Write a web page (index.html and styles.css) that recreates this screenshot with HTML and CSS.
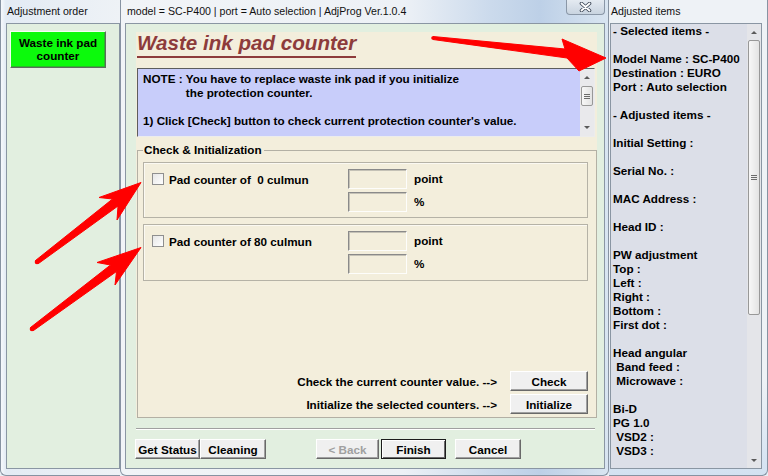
FILE: index.html
```html
<!DOCTYPE html>
<html>
<head>
	<meta charset="utf-8">
	<link rel="stylesheet" href="styles.css">
</head>

<body>
	<div class="window win-left">
		<div class="titlebar">Adjustment order</div>
		<div class="client client-left">
			<button class="order-button">Waste ink pad<br>counter</button>
		</div>
	</div>

	<div class="window win-main">
		<div class="titlebar">
			<span class="title-text">model = SC-P400 | port = Auto selection | AdjProg Ver.1.0.4</span>
			<span class="close-button">
				<svg width="13" height="10" viewBox="0 0 13 10">
					<path d="M2.5 1.5 L10.5 8.5 M10.5 1.5 L2.5 8.5" stroke="#3a4555" stroke-width="3.6" stroke-linecap="round" fill="none"/>
					<path d="M2.5 1.5 L10.5 8.5 M10.5 1.5 L2.5 8.5" stroke="#fff" stroke-width="1.9" stroke-linecap="round" fill="none"/>
				</svg>
			</span>
		</div>
		<div class="client client-main">
			<div class="panel">
				<div class="panel-title"><span>Waste ink pad counter</span></div>

				<div class="note">
					<div class="note-text">
						<div class="note-row">
							<span>NOTE :&nbsp;</span>
							<span>You have to replace waste ink pad if you initialize<br>the protection counter.</span>
						</div>
						<div class="note-step">1) Click [Check] button to check current protection counter's value.</div>
					</div>
					<div class="scrollbar note-scroll">
						<span class="arrow-box"><span class="arrow-up"></span></span>
						<span class="thumb note-thumb"><span class="grip"></span></span>
						<span class="track"></span>
						<span class="arrow-box"><span class="arrow-down"></span></span>
					</div>
				</div>

				<fieldset class="group">
					<legend>Check &amp; Initialization</legend>

					<div class="counter">
						<div class="counter-label"><span class="checkbox"></span>Pad counter of  0 culmun</div>
						<span class="field"></span>
						<span class="unit">point</span>
						<span></span>
						<span class="field"></span>
						<span class="unit">%</span>
					</div>

					<div class="counter">
						<div class="counter-label"><span class="checkbox"></span>Pad counter of 80 culmun</div>
						<span class="field"></span>
						<span class="unit">point</span>
						<span></span>
						<span class="field"></span>
						<span class="unit">%</span>
					</div>

					<div class="actions">
						<div class="action-row">
							<span>Check the current counter value. --&gt;</span>
							<button class="btn btn-action">Check</button>
						</div>
						<div class="action-row">
							<span>Initialize the selected counters. --&gt;</span>
							<button class="btn btn-action">Initialize</button>
						</div>
					</div>
				</fieldset>
			</div>

			<div class="separator"></div>

			<div class="footer">
				<button class="btn">Get Status</button>
				<button class="btn btn-clean">Cleaning</button>
				<button class="btn btn-back" disabled>&lt; Back</button>
				<button class="btn btn-default">Finish</button>
				<button class="btn btn-cancel">Cancel</button>
			</div>
		</div>
	</div>

	<div class="window win-right">
		<div class="titlebar">Adjusted items</div>
		<div class="client client-right">
			<div class="items">
				<div>- Selected items -</div>
				<div class="blank"></div>
				<div>Model Name : SC-P400</div>
				<div>Destination : EURO</div>
				<div>Port : Auto selection</div>
				<div class="blank"></div>
				<div>- Adjusted items -</div>
				<div class="blank"></div>
				<div>Initial Setting :</div>
				<div class="blank"></div>
				<div>Serial No. :</div>
				<div class="blank"></div>
				<div>MAC Address :</div>
				<div class="blank"></div>
				<div>Head ID :</div>
				<div class="blank"></div>
				<div>PW adjustment</div>
				<div>Top :</div>
				<div>Left :</div>
				<div>Right :</div>
				<div>Bottom :</div>
				<div>First dot :</div>
				<div class="blank"></div>
				<div>Head angular</div>
				<div> Band feed :</div>
				<div> Microwave :</div>
				<div class="blank"></div>
				<div>Bi-D</div>
				<div>PG 1.0</div>
				<div> VSD2 :</div>
				<div> VSD3 :</div>
			</div>
			<div class="scrollbar list-scroll">
				<span class="arrow-box"><span class="arrow-up"></span></span>
				<span class="thumb list-thumb"><span class="grip"></span></span>
				<span class="track"></span>
				<span class="arrow-box"><span class="arrow-down"></span></span>
			</div>
		</div>
	</div>

	<!-- red annotation arrows drawn over the screenshot -->
	<svg class="arrows" width="768" height="476" viewBox="0 0 768 476">
		<g fill="#ff0000" stroke="#ff0000" stroke-width="1" stroke-linejoin="round">
			<polygon points="433,36.5 565,49 562,39 606,58 579,71 567,58 433,39.5"/>
			<polygon points="35.5,260.5 112.5,199 99,197.5 141,182.5 117,220 118,206 38.5,263.5"/>
			<polygon points="30.5,327.5 110.5,265 97,262.5 141,247.5 115,285 116.5,271.5 33.5,330.5"/>
		</g>
		<circle cx="37" cy="262" r="2.3" fill="#ff0000"/>
		<circle cx="32" cy="329" r="2.3" fill="#ff0000"/>
		<circle cx="433" cy="38" r="1.8" fill="#ff0000"/>
	</svg>
</body>

</html>
```

FILE: styles.css
```css
body {
	margin: 0;
	width: 768px;
	height: 476px;
	overflow: hidden;
	position: relative;
	display: flex;
	font-family: 'Liberation Sans', Arial, sans-serif;
	font-size: 11.7px;
	font-weight: bold;
	color: #000;
	background: #e9eff5;
}

/* window frames */

.window {
	box-sizing: border-box;
	height: 476px;
	display: flex;
	flex-direction: column;
	border: 1px solid #8793a2;
	border-top: none;
	border-radius: 0 0 6px 6px;
	padding-bottom: 6px;
	background: #edf2f7;
}

.win-left {
	width: 120px;
	padding-left: 5px;
	border-right: none;
	border-radius: 0 0 0 6px;
	background: linear-gradient(to right, #f6f9fc, #e3ebf4 4%, #eef2f6);
}

.win-main {
	width: 489px;
	padding-left: 4px;
	padding-right: 3px;
	background: linear-gradient(to right, #f1f4f7 0%, #edf1f6 58%, #cbdaec 76%, #bdd0e7 86%, #d9e5f1 100%);
}

.win-right {
	width: 159px;
	padding-left: 1px;
	padding-right: 5px;
	border-left: none;
	border-radius: 0 0 6px 0;
	background: linear-gradient(to bottom, #eef2f6 80%, #d3e2f2);
}

.titlebar {
	height: 23px;
	flex: none;
	display: flex;
	align-items: flex-start;
	font-size: 10.6px;
	font-weight: normal;
	line-height: 22px;
	white-space: nowrap;
	color: #111;
}

.win-left .titlebar {
	padding-left: 1px;
}

.win-main .titlebar {
	padding-left: 2px;
}

.win-right .titlebar {
	padding-left: 1px;
}

.close-button {
	margin-left: auto;
	width: 39px;
	height: 15px;
	box-sizing: border-box;
	display: flex;
	align-items: center;
	justify-content: center;
	border: 1px solid #8a97a7;
	border-top: none;
	border-radius: 0 0 4px 4px;
	background: linear-gradient(to bottom, #e4eaf1, #c9d4e0);
}

.close-button svg {
	display: block;
	margin-top: -1px;
}

.client {
	flex: 1;
	min-height: 0;
	box-sizing: border-box;
	border: 1px solid #8a96a3;
}

/* left window */

.client-left {
	background: #e2efe0;
	padding: 7px 0 0 3px;
}

.order-button {
	display: block;
	width: 96px;
	height: 37px;
	padding: 0 0 2px;
	font-family: inherit;
	font-size: 11.7px;
	font-weight: bold;
	line-height: 13px;
	color: #000;
	background: #0cfa0c;
	border: 1px solid;
	border-color: #f4fff4 #5f6b5f #5f6b5f #f4fff4;
	box-shadow: inset -1px -1px 0 #2ab82a;
}

/* main window */

.client-main {
	background: #e2efe0;
	padding-top: 8px;
	display: flex;
	flex-direction: column;
}

.panel {
	width: 461px;
	margin-left: 10px;
	background: #f3eedc;
}

.panel-title {
	height: 36px;
	padding-left: 1px;
}

.panel-title span {
	display: inline-block;
	font-size: 20.6px;
	font-style: italic;
	line-height: 22px;
	padding-bottom: 2px;
	color: #8d3b3b;
	border-bottom: 2px solid #8d3b3b;
}

.note {
	box-sizing: border-box;
	width: 458px;
	height: 69px;
	margin-left: 1px;
	display: flex;
	background: #c8cdfa;
	border: 1px solid;
	border-color: #5d5d5d #ececec #ececec #5d5d5d;
}

.note-text {
	flex: 1;
	padding: 3px 0 0 5px;
	line-height: 14px;
	white-space: nowrap;
}

.note-row {
	display: flex;
}

.note-step {
	margin-top: 14px;
}

.scrollbar {
	flex: none;
	display: flex;
	flex-direction: column;
	background: #eaeaea;
}

.note-scroll {
	width: 14px;
	background: #e9e9ec;
}

.arrow-box {
	height: 17px;
	flex: none;
	display: flex;
	align-items: center;
	justify-content: center;
}

.arrow-up,
.arrow-down {
	width: 0;
	height: 0;
	border-left: 3px solid transparent;
	border-right: 3px solid transparent;
}

.arrow-up {
	border-bottom: 3px solid #5a5a5a;
}

.arrow-down {
	border-top: 3px solid #5a5a5a;
}

.thumb {
	flex: none;
	box-sizing: border-box;
	margin: 0 1px;
	display: flex;
	align-items: center;
	justify-content: center;
	border: 1px solid #989898;
	border-radius: 2px;
	background: linear-gradient(to right, #f7f7f7, #e3e3e3);
}

.note-thumb {
	height: 20px;
}

.grip {
	width: 6px;
	height: 5px;
	background: repeating-linear-gradient(to bottom, #6b6b6b 0, #6b6b6b 1px, transparent 1px, transparent 2px);
}

.track {
	flex: 1;
}

/* group box */

.group {
	box-sizing: border-box;
	width: 460px;
	height: 275px;
	margin: 6px 0 0 1px;
	padding: 5px 8px 3px 5px;
	min-width: 0;
	border: 1px solid #b3b0a4;
	display: flex;
	flex-direction: column;
}

.group legend {
	padding: 0 2px 0 1px;
	line-height: 14px;
}

.counter {
	box-sizing: border-box;
	height: 56px;
	padding: 6px 0 5px;
	display: grid;
	grid-template-columns: 204px 59px auto;
	grid-template-rows: 20px 20px;
	row-gap: 3px;
	border: 1px solid #b5b2a6;
	box-shadow: inset 1px 1px 0 #fbf9f2;
}

.counter + .counter {
	margin-top: 6px;
	height: 57px;
}

.counter-label {
	display: flex;
	align-items: center;
	white-space: pre;
}

.checkbox {
	box-sizing: border-box;
	width: 12px;
	height: 12px;
	margin: 0 5px 0 8px;
	border: 1px solid #8f8f8f;
	background: linear-gradient(135deg, #e6e6e6, #ffffff);
}

.field {
	box-sizing: border-box;
	border: 1px solid;
	border-color: #8a8a8a #fdfdfb #fdfdfb #8a8a8a;
	box-shadow: inset 1px 1px 0 #c4c1b6;
}

.unit {
	padding-left: 7px;
	line-height: 20px;
}

.actions {
	margin-top: auto;
	display: flex;
	flex-direction: column;
	gap: 3px;
}

.action-row {
	display: flex;
	justify-content: flex-end;
	align-items: center;
	gap: 13px;
}

/* buttons */

.btn {
	box-sizing: border-box;
	height: 20px;
	width: 65px;
	padding: 0;
	font-family: inherit;
	font-size: 11.7px;
	font-weight: bold;
	color: #000;
	background: #f0f0f0;
	border: 1px solid;
	border-color: #ffffff #696969 #696969 #ffffff;
	box-shadow: inset -1px -1px 0 #a0a0a0;
}

.btn-action {
	width: 78px;
}

.btn:disabled {
	color: #a0a0a0;
}

.btn-default {
	border-color: #1c1c1c;
	box-shadow: inset 1px 1px 0 #ffffff, inset -1px -1px 0 #696969;
}

.separator {
	width: 459px;
	height: 1px;
	margin: 10px 0 0 10px;
	background: #a0a0a0;
	border-bottom: 1px solid #ffffff;
}

.footer {
	display: flex;
	margin-top: 9px;
	padding-left: 9px;
}

.btn-clean {
	width: 66px;
}

.btn-back {
	width: 63px;
	margin-left: 50px;
}

.btn-default {
	margin-left: 2px;
}

.btn-cancel {
	width: 66px;
	margin-left: 9px;
}

/* right window */

.client-right {
	display: flex;
	background: #dcdfe8;
}

.items {
	flex: 1;
	padding: 0 0 0 2px;
	line-height: 14px;
}

.items div {
	white-space: pre;
}

.blank {
	height: 14px;
}

.list-scroll {
	width: 14px;
	background: #e4e5e9;
}

.list-scroll .arrow-box {
	height: 16px;
}

.list-thumb {
	height: 275px;
}

.arrows {
	position: absolute;
	left: 0;
	top: 0;
	pointer-events: none;
}
```
